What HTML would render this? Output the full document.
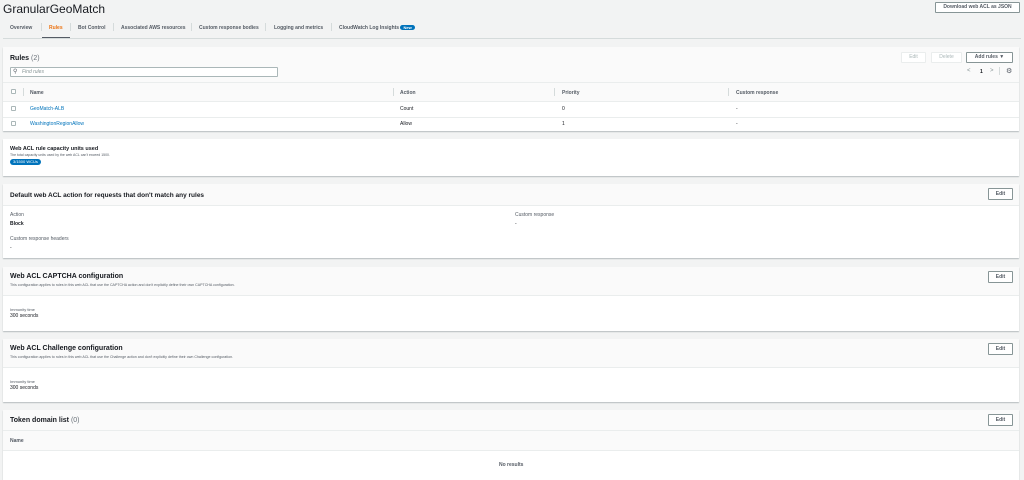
<!DOCTYPE html>
<html><head><meta charset="utf-8"><style>
*{box-sizing:border-box;margin:0;padding:0}
body{width:1024px;height:469px;overflow:hidden;background:#f2f3f3;font-family:"Liberation Sans",sans-serif;color:#16191f;position:relative;font-size:5px}
.a{position:absolute;white-space:nowrap}
.card{position:absolute;left:3px;width:1016px;background:#fff;box-shadow:0 1px 1px rgba(0,28,36,.25)}
.hd{position:absolute;left:0;right:0;top:0;background:#fafafa;border-bottom:1px solid #eaeded}
.btn{position:absolute;border:1px solid #879596;background:#fff;font-size:5px;font-weight:bold;color:#545b64;text-align:center;border-radius:1px}
.dis{border-color:#eaeded;color:#aab7b8;font-weight:normal}
.t{font-weight:bold;font-size:7px}
.lbl{color:#545b64;font-size:5px}
.lnk{color:#0073bb}
.sep{position:absolute;width:1px;height:8px;background:#d5dbdb}
.cb{position:absolute;width:5px;height:5px;border:1px solid #aab7b8;border-radius:1px;background:#fff}
</style></head><body>
<div class="a" style="left:3px;top:2px;font-size:12px;color:#16191f">GranularGeoMatch</div>
<div class="btn" style="left:935px;top:2px;width:85px;height:11px;line-height:9px">Download web ACL as JSON</div>

<div class="a" style="top:25px;left:10px;font-size:5px;color:#545b64;font-weight:bold">Overview</div>
<div class="a" style="top:25px;left:49px;font-size:5px;color:#ec7211;font-weight:bold">Rules</div>
<div style="position:absolute;left:42px;top:37px;width:28px;height:2px;background:#545b64"></div>
<div class="sep" style="left:41px;top:23px"></div>
<div class="sep" style="left:70px;top:23px"></div>
<div class="a" style="top:25px;left:78px;font-size:5px;color:#545b64;font-weight:bold">Bot Control</div>
<div class="sep" style="left:113px;top:23px"></div>
<div class="a" style="top:25px;left:121px;font-size:5px;color:#545b64;font-weight:bold">Associated AWS resources</div>
<div class="sep" style="left:191px;top:23px"></div>
<div class="a" style="top:25px;left:199px;font-size:5px;color:#545b64;font-weight:bold">Custom response bodies</div>
<div class="sep" style="left:265px;top:23px"></div>
<div class="a" style="top:25px;left:274px;font-size:5px;color:#545b64;font-weight:bold">Logging and metrics</div>
<div class="sep" style="left:331px;top:23px"></div>
<div class="a" style="top:25px;left:339px;font-size:5px;color:#545b64;font-weight:bold">CloudWatch Log Insights <span style="background:#0073bb;color:#fff;border-radius:4px;padding:0 3px;font-size:4px">New</span></div>
<div style="position:absolute;left:3px;right:3px;top:38px;height:1px;background:#d5dbdb"></div>

<div class="card" style="top:47px;height:84px">
 <div class="hd" style="height:36px"></div>
 <div class="a t" style="left:7px;top:8px">Rules <span style="font-weight:normal;color:#687078">(2)</span></div>
 <div style="position:absolute;left:7px;top:20px;width:268px;height:10px;border:1px solid #aab7b8;background:#fff;border-radius:1px"></div>
 <div class="a" style="left:10px;top:21px;font-size:6px;color:#545b64">&#9906;</div>
 <div class="a" style="left:19px;top:22px;font-size:5px;color:#879596;font-style:italic">Find rules</div>
 <div class="btn dis" style="left:898px;top:5px;width:25px;height:11px;line-height:9px">Edit</div>
 <div class="btn dis" style="left:928px;top:5px;width:31px;height:11px;line-height:9px">Delete</div>
 <div class="btn" style="left:963px;top:5px;width:47px;height:11px;line-height:9px">Add rules &#9660;</div>
 <div class="a" style="left:964px;top:21px;font-size:6px;color:#879596">&lt;</div>
 <div class="a" style="left:977px;top:22px;font-size:5px;font-weight:bold">1</div>
 <div class="a" style="left:987px;top:21px;font-size:6px;color:#879596">&gt;</div>
 <div class="sep" style="left:996px;top:20px"></div>
 <div class="a" style="left:1003px;top:20px;font-size:7px;color:#545b64">&#9881;</div>
 <div style="position:absolute;left:0;right:0;top:36px;height:19px;background:#fafafa;border-bottom:1px solid #eaeded"></div>
 <div class="cb" style="left:8px;top:42px"></div>
 <div class="sep" style="left:20px;top:41px"></div>
 <div class="a lbl" style="left:27px;top:43px;font-weight:bold">Name</div>
 <div class="sep" style="left:390px;top:41px"></div>
 <div class="a lbl" style="left:397px;top:43px;font-weight:bold">Action</div>
 <div class="sep" style="left:551px;top:41px"></div>
 <div class="a lbl" style="left:559px;top:43px;font-weight:bold">Priority</div>
 <div class="sep" style="left:725px;top:41px"></div>
 <div class="a lbl" style="left:733px;top:43px;font-weight:bold">Custom response</div>
 <div class="cb" style="left:8px;top:59px"></div>
 <div class="a lnk" style="left:27px;top:59px">GeoMatch-ALB</div>
 <div class="a" style="left:397px;top:59px">Count</div>
 <div class="a" style="left:559px;top:59px">0</div>
 <div class="a" style="left:733px;top:59px">-</div>
 <div style="position:absolute;left:0;right:0;top:70px;height:1px;background:#eaeded"></div>
 <div class="cb" style="left:8px;top:74px"></div>
 <div class="a lnk" style="left:27px;top:74px">WashingtonRegionAllow</div>
 <div class="a" style="left:397px;top:74px">Allow</div>
 <div class="a" style="left:559px;top:74px">1</div>
 <div class="a" style="left:733px;top:74px">-</div>
</div>

<div class="card" style="top:139px;height:37px">
 <div class="a" style="left:7px;top:7px;font-size:5.5px;font-weight:bold">Web ACL rule capacity units used</div>
 <div class="a" style="left:7px;top:14px;font-size:3.5px;color:#545b64">The total capacity units used by the web ACL can't exceed 1500.</div>
 <div class="a" style="left:7px;top:20px;font-size:4px;color:#fff;background:#0073bb;border-radius:4px;padding:0 3px;height:6px;line-height:6px">3/1500 WCUs</div>
</div>

<div class="card" style="top:184px;height:74px">
 <div class="hd" style="height:22px"></div>
 <div class="a t" style="left:7px;top:8px;font-size:6.5px">Default web ACL action for requests that don't match any rules</div>
 <div class="btn" style="left:985px;top:4px;width:25px;height:12px;line-height:10px">Edit</div>
 <div class="a lbl" style="left:7px;top:28px">Action</div>
 <div class="a" style="left:7px;top:37px;font-weight:bold">Block</div>
 <div class="a lbl" style="left:512px;top:28px">Custom response</div>
 <div class="a" style="left:512px;top:37px">-</div>
 <div class="a lbl" style="left:7px;top:52px">Custom response headers</div>
 <div class="a" style="left:7px;top:61px">-</div>
</div>

<div class="card" style="top:267px;height:64px">
 <div class="hd" style="height:29px"></div>
 <div class="a t" style="left:7px;top:6px">Web ACL CAPTCHA configuration</div>
 <div class="a" style="left:7px;top:16px;font-size:3.6px;color:#545b64">This configuration applies to rules in this web ACL that use the CAPTCHA action and don't explicitly define their own CAPTCHA configuration.</div>
 <div class="btn" style="left:985px;top:4px;width:25px;height:12px;line-height:10px">Edit</div>
 <div class="a lbl" style="left:7px;top:40px;font-size:4px">Immunity time</div>
 <div class="a" style="left:7px;top:46px;font-size:5px">300 seconds</div>
</div>

<div class="card" style="top:339px;height:63px">
 <div class="hd" style="height:29px"></div>
 <div class="a t" style="left:7px;top:6px">Web ACL Challenge configuration</div>
 <div class="a" style="left:7px;top:16px;font-size:3.6px;color:#545b64">This configuration applies to rules in this web ACL that use the Challenge action and don't explicitly define their own Challenge configuration.</div>
 <div class="btn" style="left:985px;top:4px;width:25px;height:12px;line-height:10px">Edit</div>
 <div class="a lbl" style="left:7px;top:40px;font-size:4px">Immunity time</div>
 <div class="a" style="left:7px;top:46px;font-size:5px">300 seconds</div>
</div>

<div class="card" style="top:410px;height:70px">
 <div class="hd" style="height:21px"></div>
 <div class="a t" style="left:7px;top:7px">Token domain list <span style="font-weight:normal;color:#687078">(0)</span></div>
 <div class="btn" style="left:985px;top:4px;width:25px;height:12px;line-height:10px">Edit</div>
 <div style="position:absolute;left:0;right:0;top:21px;height:20px;background:#fafafa;border-bottom:1px solid #eaeded"></div>
 <div class="a lbl" style="left:7px;top:28px;font-weight:bold">Name</div>
 <div class="a" style="left:496px;top:52px;font-weight:bold;color:#545b64">No results</div>
</div>
</body></html>
